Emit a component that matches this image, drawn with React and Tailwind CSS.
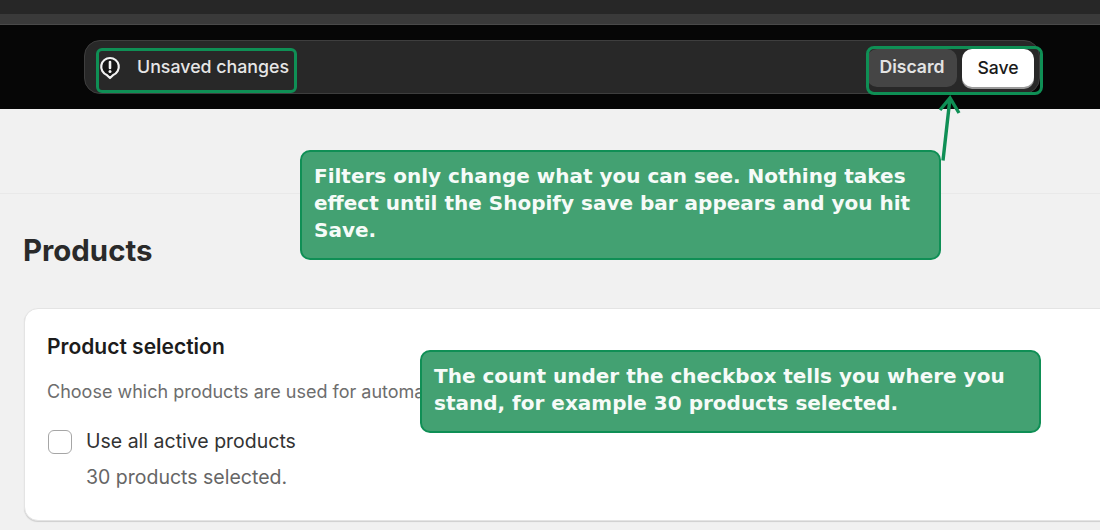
import React from "react";

const Alert = () => (
  <svg width="24" height="26" viewBox="0 0 24 26" fill="none">
    <path d="M11 3a8.8 8.8 0 0 1 3.2 17L11 23l-3.2-3A8.8 8.8 0 0 1 11 3Z" fill="#161616" stroke="#f2f2f2" strokeWidth="2.2" strokeLinejoin="round" />
    <path d="M11 7v6" stroke="#f2f2f2" strokeWidth="2.6" strokeLinecap="round" />
    <circle cx="11" cy="16.5" r="1.5" fill="#f2f2f2" />
  </svg>
);

export default function App() {
  return (
    <div className="relative w-[1100px] h-[530px] overflow-hidden bg-[#f1f1f1] font-['Inter',sans-serif]">
      <div className="h-[14px] bg-[#272727]" />
      <div className="h-[11px] bg-[#3a3a3a] border-b border-[#4a4a4a]" />
      <div className="h-[84px] bg-[#060606] pt-[15px] pl-[84px] pr-[60px]">
        <div className="h-[54px] rounded-[16px] bg-[#282828] border border-[#3e3e3e] flex items-center justify-between pl-[14px] pr-[5px]">
          <div className="flex items-center gap-[14px] pt-[1px]">
            <Alert />
            <span className="text-[17.8px] font-medium text-[#e6e6e6]">Unsaved changes</span>
          </div>
          <div className="flex items-center gap-[5px] pt-[1px]">
            <div className="w-[90px] h-[38px] rounded-[10px] bg-[#454545] flex items-center justify-center text-[17.6px] font-semibold text-[#e3e3e3]">Discard</div>
            <div className="w-[72px] h-[38px] rounded-[10px] bg-white flex items-center justify-center pt-[2px] text-[17.6px] font-medium text-[#1a1a1a] shadow-[0_2px_0_#9a9a9a]">Save</div>
          </div>
        </div>
      </div>

      <div className="h-[85px] border-b border-[#e9e9e9]" />

      <div className="pl-[23px]">
        <h1 className="mt-[37px] text-[29.4px] leading-[40px] font-bold text-[#2a2a2a]">Products</h1>
        <div className="mt-[37px] ml-[1px] w-[1100px] h-[213px] rounded-[14px] bg-white border border-[#e4e4e4] shadow-[0_1px_1px_#cfcfcf] pl-[22px] pt-[24px]">
          <h2 className="text-[21px] leading-[28px] font-semibold text-[#1c1c1c]">Product selection</h2>
          <p className="mt-[17px] text-[18px] leading-[28px] text-[#6d6d6d] whitespace-nowrap">Choose which products are used for automatic updates</p>
          <div className="mt-[17px] flex items-start gap-[14px]">
            <div className="ml-[1px] mt-[7px] w-[24px] h-[24px] rounded-[6px] bg-white border-[1.5px] border-[#a6a6a6]" />
            <div>
              <div className="text-[19.5px] leading-[36px] text-[#333333]">Use all active products</div>
              <div className="text-[19.5px] leading-[36px] text-[#666666]">30 products selected.</div>
            </div>
          </div>
        </div>
      </div>

      <div className="absolute left-[96px] top-[48px] w-[201px] h-[45px] rounded-[6px] border-[3px] border-[#0f8f55]" />
      <div className="absolute left-[866px] top-[46px] w-[177px] h-[49px] rounded-[8px] border-[3px] border-[#0f8f55]" />

      <svg className="absolute left-[930px] top-[90px]" width="40" height="75" viewBox="0 0 40 75" fill="none">
        <path d="M13 70.5 20 8M10 20l10-12 9 15" stroke="#0f8f55" strokeWidth="3.4" />
      </svg>

      <div className="absolute left-[300px] top-[150px] w-[641px] h-[110px] rounded-[10px] bg-[#43a172] border-2 border-[#0f8f55] pl-[12px] pt-[11px] font-['DejaVu_Sans',sans-serif] font-bold text-[20px] leading-[27px] text-[#f6fbf8]">
        Filters only change what you can see. Nothing takes<br />effect until the Shopify save bar appears and you hit<br />Save.
      </div>
      <div className="absolute left-[420px] top-[350px] w-[621px] h-[83px] rounded-[10px] bg-[#43a172] border-2 border-[#0f8f55] pl-[12px] pt-[11px] font-['DejaVu_Sans',sans-serif] font-bold text-[20px] leading-[27px] text-[#f6fbf8]">
        The count under the checkbox tells you where you<br />stand, for example 30 products selected.
      </div>
    </div>
  );
}
